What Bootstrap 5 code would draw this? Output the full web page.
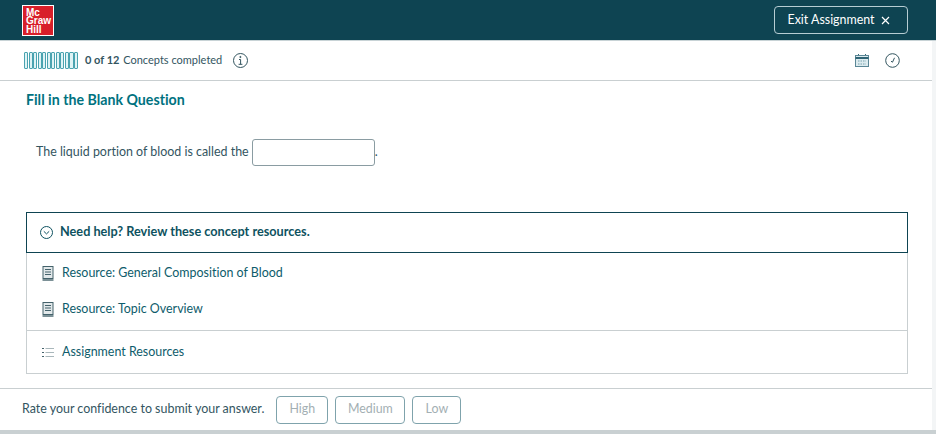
<!DOCTYPE html>
<html lang="en"><head><meta charset="utf-8">
<link href="https://cdn.jsdelivr.net/npm/bootstrap@5.3.0/dist/css/bootstrap.min.css" rel="stylesheet">
<style>
html,body{height:434px;overflow:hidden}
body{font-family:Lato,"Liberation Sans",sans-serif;font-size:12.45px;font-variant-ligatures:none;color:#33555f;background:#fff;border-bottom:4px solid #c9d0d2}
.page-shell{height:430px;display:flex;flex-direction:column;border-right:4px solid #f3f5f6}
.page-shell>*{flex-shrink:0}
.top-bar{height:41px;background:#0e4452;border-bottom:1px solid #c8d3d6;margin-right:-4px;padding:0 28px 0 22px}
.mh-logo{width:32px;height:31px;background:#d81f2a;border:1px solid #fff;color:#fff;font:700 10px/8.8px "Liberation Sans",sans-serif;padding:3px 0 0 3px}
.exit-btn{width:134px;height:28px;border:1px solid #b6cdd3;border-radius:4px;background:transparent;color:#fff;font-size:12.4px;padding:0 4px 0 0}
.exit-btn svg{margin-left:-1px}
.status-bar{height:40px;border-bottom:1px solid #c9cfd1;padding:0 32px 0 24px}
.pills{display:flex;gap:.5px;width:54px;height:17px}
.pills i{flex:1;border:1px solid #4aa3b0;border-radius:1px;background:#dff3f5}
.status-text{color:#33555f;font-size:11px;margin-left:7px}
.status-text b{color:#33555f;margin-right:1px}
.info-ico{margin-left:11px}
.q-title{color:#00727f;font-weight:700;font-size:14.2px;margin:10px 0 0 26px;line-height:17px}
.q-line{margin:31px 0 0 36px;height:27px}
.blank{width:123px;height:27px;border:1px solid #8a9ca2;border-radius:3px;margin-left:3px;background:#fff}
.res-box{margin:46px 24px 0 26px;border:1px solid #c9cfd1;border-top:0}
.res-head{height:41px;border:1.5px solid #0e4452;margin:0 -1px;padding:0 0 1px 13px;gap:7px;color:#0e5260;font-weight:700;font-size:12.7px}
.res-item{height:36px;padding-left:15px;color:#0e5c6b}
.res-links{padding:2px 0 3px;border-bottom:1px solid #c9cfd1}
.res-last{height:42px;padding-left:15px;color:#0e5c6b}
.rate-bar{margin-top:14px;height:42px;border-top:1px solid #c9cfd1;padding:0 0 0 22px;gap:7px}
.rate-label{margin-right:5px}
.rate-btn{height:28px;border:1px solid #7fa3ac;border-radius:4px;background:#fff;color:#a3afb3;font-size:12.4px;padding:0}
.rate-h{width:52px}.rate-m{width:70px}.rate-l{width:49px}
</style></head><body>
<div class="page-shell">
<header class="top-bar d-flex align-items-center justify-content-between">
<div class="mh-logo">Mc<br>Graw<br>Hill</div>
<button class="exit-btn d-flex align-items-center justify-content-center gap-2" type="button">Exit Assignment
<svg width="9" height="9" viewBox="0 0 9 9"><path d="M1 1l7 7M8 1l-7 7" stroke="#fff" stroke-width="1.2"/></svg></button>
</header>
<div class="status-bar d-flex align-items-center">
<div class="pills"><i></i><i></i><i></i><i></i><i></i><i></i><i></i><i></i><i></i><i></i><i></i><i></i></div>
<span class="status-text"><b>0 of 12</b> Concepts completed</span>
<svg class="info-ico" width="15" height="15" viewBox="0 0 15 15" fill="none" stroke="#33555f"><circle cx="7.5" cy="7.5" r="7"/><path d="M6 6.5h1.6V11.3M5.6 11.3h3.8"/><circle cx="7.4" cy="4" r=".6" fill="#33555f"/></svg>
<svg class="ms-auto" width="14" height="13" viewBox="0 0 14 13" fill="none"><path d="M3.5 0v2M10.5 0v2" stroke="#3a6a78"/><rect x=".5" y="1.5" width="13" height="11" fill="#dcebef" stroke="#5b8796"/><path d="M.5 4h13" stroke="#2f6475" stroke-width="2"/><path d="M3 7h8M3 10h8" stroke="#7aa3ae" stroke-dasharray="1.5 1"/></svg>
<svg class="ms-3" width="15" height="15" viewBox="0 0 15 15" fill="none" stroke="#33555f"><circle cx="7.5" cy="7.5" r="6.8"/><path d="M6 8.2l1.5 1 2-4.4"/></svg>
</div>
<h1 class="q-title">Fill in the Blank Question</h1>
<div class="q-line d-flex align-items-center">The liquid portion of blood is called the<span class="blank"></span><span>.</span></div>
<section class="res-box">
<div class="res-head d-flex align-items-center"><svg width="13" height="13" viewBox="0 0 13 13" fill="none" stroke="#0e5260"><circle cx="6.5" cy="6.5" r="6"/><path d="M3.8 5.3l2.7 2.6 2.7-2.6"/></svg><span>Need help? Review these concept resources.</span></div>
<div class="res-links">
<div class="res-item d-flex align-items-center gap-2"><svg width="12" height="15" viewBox="0 0 12 15" fill="none" stroke="#44626b"><rect x="1" y=".5" width="10" height="12" fill="#e2e8ea"/><path d="M3 3.5h6M3 6h6M3 8.5h6"/><path d="M.5 14h11" stroke-width="1.4"/></svg>Resource: General Composition of Blood</div>
<div class="res-item d-flex align-items-center gap-2"><svg width="12" height="15" viewBox="0 0 12 15" fill="none" stroke="#44626b"><rect x="1" y=".5" width="10" height="12" fill="#e2e8ea"/><path d="M3 3.5h6M3 6h6M3 8.5h6"/><path d="M.5 14h11" stroke-width="1.4"/></svg>Resource: Topic Overview</div>
</div>
<div class="res-last d-flex align-items-center gap-2"><svg width="12" height="11" viewBox="0 0 12 11" fill="none"><path d="M0 1.5h2M0 5.5h2M0 9.5h2" stroke="#44626b"/><path d="M3.5 1.5H12M3.5 5.5H12M3.5 9.5H12" stroke="#a9b7bb"/></svg>Assignment Resources</div>
</section>
<footer class="rate-bar d-flex align-items-center"><span class="rate-label">Rate your confidence to submit your answer.</span>
<button class="rate-btn rate-h" type="button">High</button><button class="rate-btn rate-m" type="button">Medium</button><button class="rate-btn rate-l" type="button">Low</button></footer>
</div>
</body></html>
